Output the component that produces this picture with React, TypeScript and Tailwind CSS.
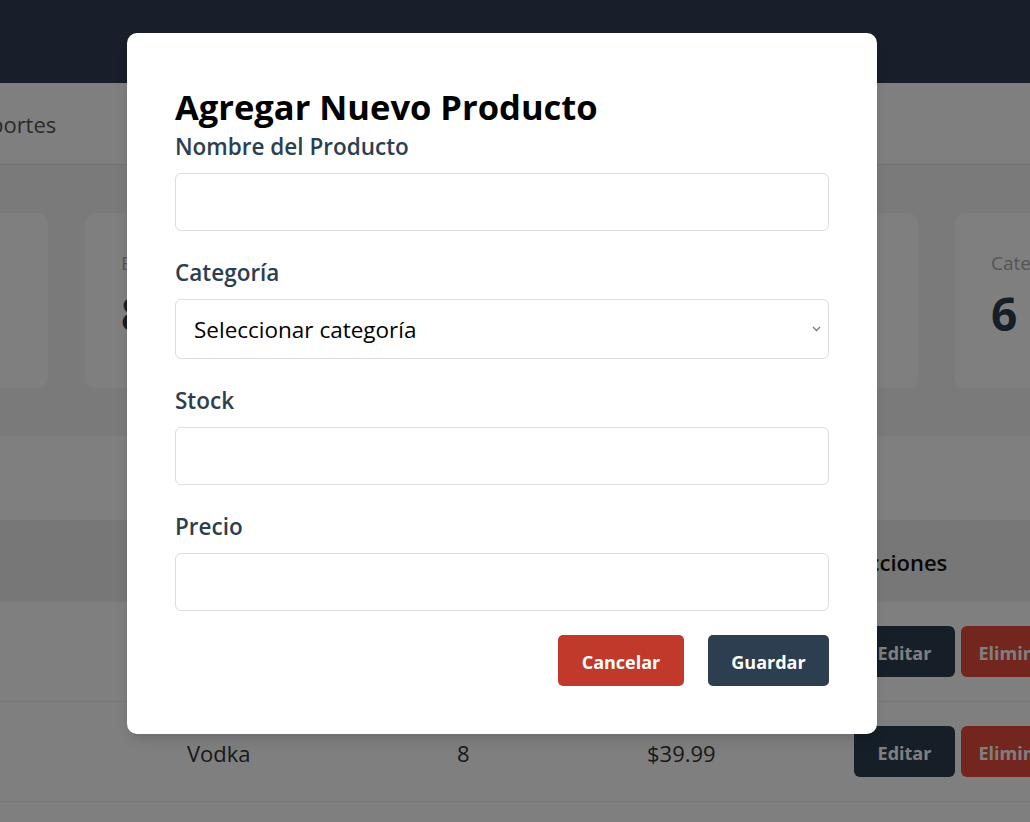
import React from 'react';

const stats = [
  { label: 'Total Productos', value: '24' },
  { label: 'En Stock', value: '85' },
  { label: 'Bajo Stock', value: '3' },
  { label: 'Ventas Hoy', value: '12' },
  { label: 'Categorías', value: '6' },
];

const rows = [
  { name: 'Whisky', stock: '12', price: '$49.99' },
  { name: 'Vodka', stock: '8', price: '$39.99' },
  { name: 'Ron', stock: '15', price: '$29.99' },
];

function Field({ label, children }: { label: string; children: React.ReactNode }) {
  return (
    <div className="mb-[24px]">
      <label className="mb-[8px] block text-[22.5px] font-semibold leading-[36px] text-[#2c3e50]">{label}</label>
      {children}
    </div>
  );
}

export default function App() {
  return (
    <div className="relative h-[822px] w-[1030px] overflow-hidden bg-[#f4f4f4] font-['Open_Sans','Noto_Sans',sans-serif]">
      {/* Dashboard underneath */}
      <header className="h-[83px] bg-[#333f55]" />
      <nav className="flex h-[82px] items-center gap-10 border-b border-[#e2e2e2] bg-white pt-[2px]">
        <span className="-ml-[36px] text-[22px] text-[#555]">Reportes</span>
      </nav>

      <div className="-ml-[205px] mt-[48px] flex gap-[37px]">
        {stats.map((s) => (
          <div key={s.label} className="h-[175px] w-[253px] shrink-0 rounded-[10px] bg-white px-9 pt-[36px]">
            <div className="text-[19px] text-[#aaa]">{s.label}</div>
            <div className="mt-[6px] text-[46px] font-bold leading-[1.3] text-[#2c3e50]">{s.value}</div>
          </div>
        ))}
      </div>

      <section className="mt-[48px] bg-white">
        <div className="h-[84px]" />
        <div className="grid h-[82px] grid-cols-[187px_270px_190px_207px_1fr] items-center bg-[#eceeec] pt-[2px] text-[22px] font-semibold text-[#111]">
          <span />
          <span>Producto</span>
          <span>Stock</span>
          <span>Precio</span>
          <span>Acciones</span>
        </div>
        {rows.map((r) => (
          <div
            key={r.name}
            className="grid h-[100px] grid-cols-[187px_270px_190px_207px_1fr] items-center border-b border-[#eee] text-[22px] text-[#333]"
          >
            <span />
            <span className="pt-[3px]">{r.name}</span>
            <span className="pt-[3px]">{r.stock}</span>
            <span className="pt-[3px]">{r.price}</span>
            <div className="flex gap-[6px]">
              <button className="h-[51px] w-[101px] shrink-0 rounded-[6px] bg-[#2c3e50] pt-[3px] text-[18px] font-bold text-white">Editar</button>
              <button className="h-[51px] w-[110px] shrink-0 rounded-[6px] bg-[#e74c3c] pt-[3px] text-[18px] font-bold text-white">Eliminar</button>
            </div>
          </div>
        ))}
      </section>

      {/* Overlay */}
      <div className="absolute inset-0 bg-black/50" />

      {/* Modal */}
      <div className="absolute left-[127px] top-[33px] w-[750px] rounded-[10px] bg-white p-12 shadow-lg">
        <h2 className="pt-[4px] text-[34.5px] font-bold leading-[44px] text-black">Agregar Nuevo Producto</h2>
        <Field label="Nombre del Producto">
          <input className="block h-[58px] w-full rounded-[6px] border border-[#ddd] px-4 text-[18px] outline-none" />
        </Field>
        <Field label="Categoría">
          <div className="relative">
            <select className="block h-[60px] w-full appearance-none rounded-[6px] border border-[#ddd] bg-white px-[18px] pt-[2px] text-[22.5px] text-black outline-none">
              <option>Seleccionar categoría</option>
            </select>
            <svg className="pointer-events-none absolute right-[8px] top-[27px]" width="9" height="6" viewBox="0 0 9 6">
              <path d="M1 1l3.5 3.5L8 1" fill="none" stroke="#777" strokeWidth="1.3" />
            </svg>
          </div>
        </Field>
        <Field label="Stock">
          <input className="block h-[58px] w-full rounded-[6px] border border-[#ddd] px-4 text-[18px] outline-none" />
        </Field>
        <div>
          <label className="mb-[8px] block text-[22.5px] font-semibold leading-[36px] text-[#2c3e50]">Precio</label>
          <input className="block h-[58px] w-full rounded-[6px] border border-[#ddd] px-4 text-[18px] outline-none" />
        </div>
        <div className="mt-[24px] flex justify-end gap-[24px]">
          <button className="h-[51px] w-[126px] rounded-[5px] bg-[#c0392b] pt-[3px] text-[18px] font-bold text-white">Cancelar</button>
          <button className="h-[51px] w-[121px] rounded-[5px] bg-[#2c3e50] pt-[3px] text-[18px] font-bold text-white">Guardar</button>
        </div>
      </div>
    </div>
  );
}
